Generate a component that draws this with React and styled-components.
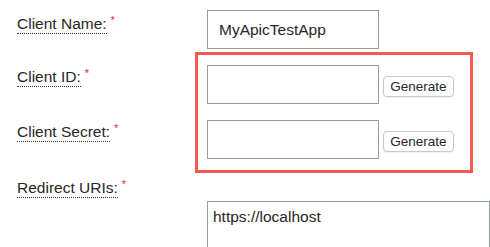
import styled, { createGlobalStyle } from "styled-components";

const GlobalStyle = createGlobalStyle`
  body {
    margin: 0;
    background: #fff;
    font-family: "Liberation Sans", Arial, sans-serif;
    color: #262626;
    overflow: hidden;
  }
`;

const Form = styled.form`
  display: flex;
  flex-direction: column;
  padding: 10px 0 0 17px;
`;

const Row = styled.div`
  display: flex;
  align-items: flex-start;
  margin-top: ${(p) => p.$top || 0}px;
`;

const LabelCol = styled.div`
  display: flex;
  flex-direction: column;
  gap: ${(p) => p.$gap || 0}px;
  width: ${(p) => p.$width}px;
  flex-shrink: 0;
  padding-top: ${(p) => p.$pad}px;
`;

const Label = styled.label`
  font-size: 15.5px;
  line-height: 18px;
  white-space: nowrap;
`;

const LabelText = styled.span`
  border-bottom: 1px dotted #333;
  padding-bottom: 1px;
`;

const Required = styled.span`
  color: #e8182d;
  font-size: 11px;
  line-height: 1;
  vertical-align: top;
  margin-left: 4px;
`;

const Highlight = styled.div`
  display: flex;
  flex-direction: column;
  gap: 16px;
  width: 278px;
  box-sizing: border-box;
  border: 3px solid #f55a4e;
  padding: 10px 0 11px 9px;
`;

const Field = styled.div`
  display: flex;
  align-items: flex-start;
  gap: 4px;
`;

const TextInput = styled.input`
  width: 172px;
  height: 39px;
  box-sizing: border-box;
  border: 1px solid #959d9b;
  border-radius: 0;
  padding: 0 11px;
  font-family: inherit;
  font-size: 15.5px;
  color: #262626;
  background: #fff;
  outline: none;
`;

const GenerateButton = styled.button`
  margin-top: 11px;
  height: 21px;
  width: 71px;
  padding: 0;
  box-sizing: border-box;
  background: #fff;
  border: 1px solid #c8c8c8;
  border-radius: 4px;
  box-shadow: 0 1px 1px rgba(0, 0, 0, 0.06);
  font-family: inherit;
  font-size: 13.5px;
  color: #262626;
  cursor: pointer;
`;

const TextArea = styled.textarea`
  margin-top: 28px;
  width: 420px;
  height: 60px;
  box-sizing: border-box;
  border: 1px solid #959d9b;
  padding: 6px 5px;
  font-family: inherit;
  font-size: 15.5px;
  line-height: 18px;
  color: #262626;
  resize: none;
  outline: none;
`;

const FieldLabel = ({ children }) => (
  <Label>
    <LabelText>{children}</LabelText>
    <Required>*</Required>
  </Label>
);

export default function App() {
  return (
    <>
      <GlobalStyle />
      <Form onSubmit={(e) => e.preventDefault()}>
        <Row>
          <LabelCol $width={190} $pad={5}>
            <FieldLabel>Client Name:</FieldLabel>
          </LabelCol>
          <TextInput defaultValue="MyApicTestApp" />
        </Row>
        <Row $top={3}>
          <LabelCol $width={178} $pad={16} $gap={37}>
            <FieldLabel>Client ID:</FieldLabel>
            <FieldLabel>Client Secret:</FieldLabel>
          </LabelCol>
          <Highlight>
            <Field>
              <TextInput />
              <GenerateButton type="button">Generate</GenerateButton>
            </Field>
            <Field>
              <TextInput />
              <GenerateButton type="button">Generate</GenerateButton>
            </Field>
          </Highlight>
        </Row>
        <Row>
          <LabelCol $width={190} $pad={6}>
            <FieldLabel>Redirect URIs:</FieldLabel>
          </LabelCol>
          <TextArea defaultValue="https://localhost" />
        </Row>
      </Form>
    </>
  );
}
